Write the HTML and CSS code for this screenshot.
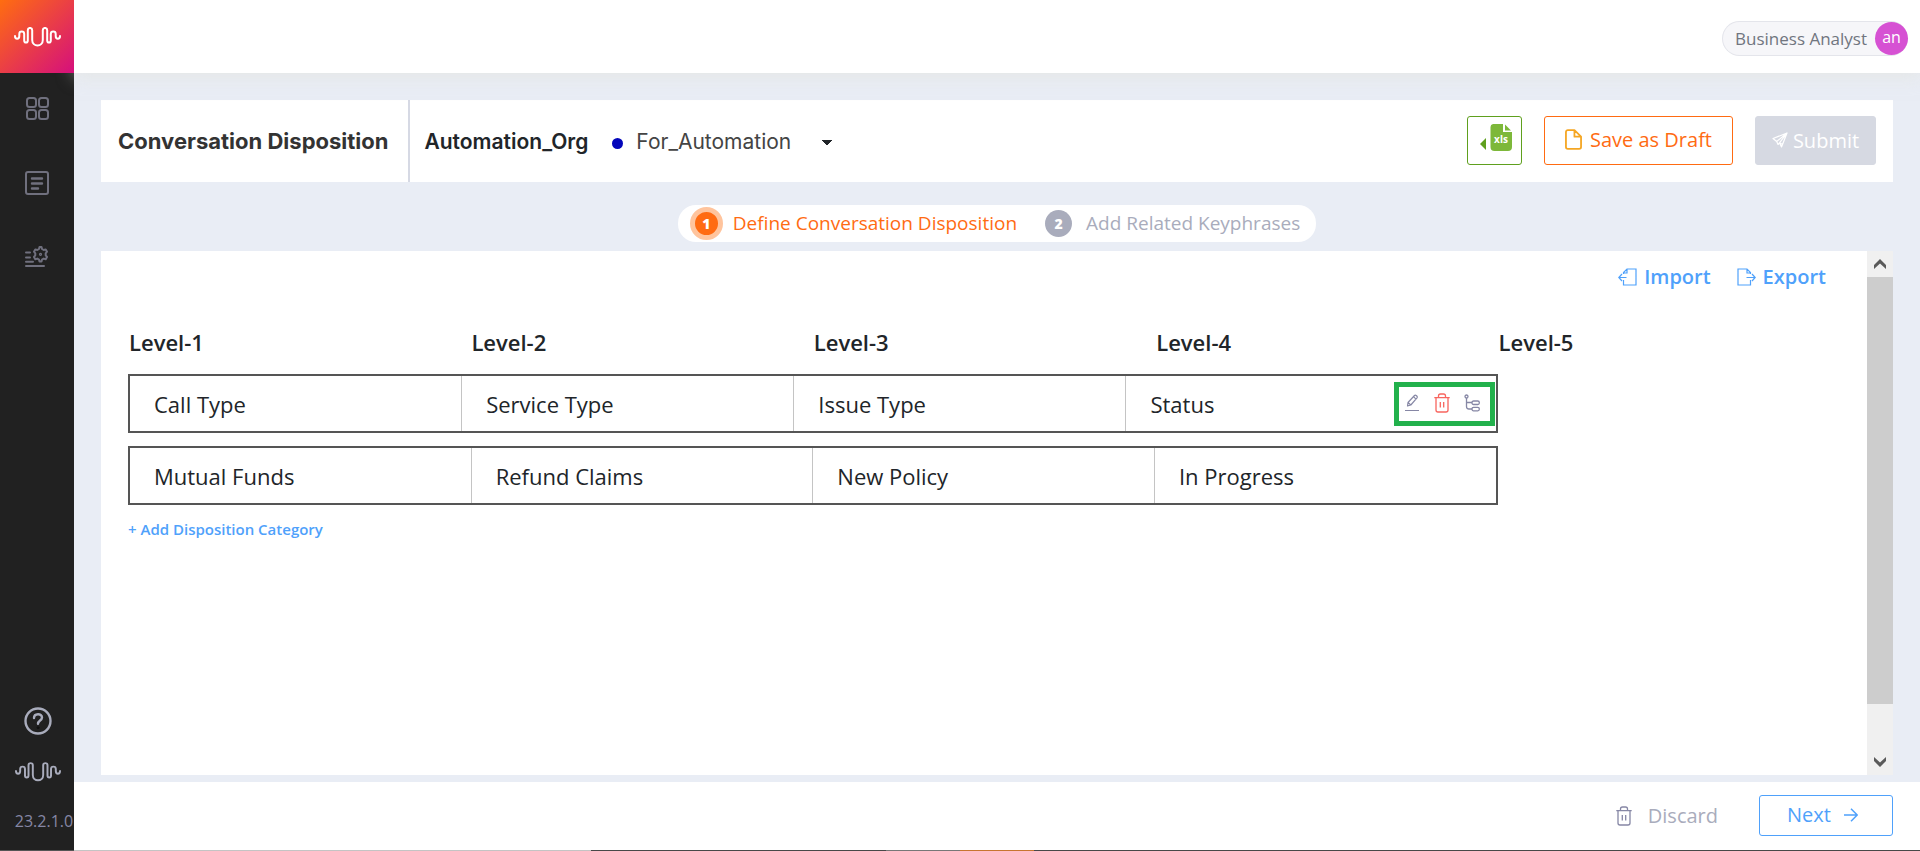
FILE: index.html
```html
<!DOCTYPE html>
<html lang="en">
<head>
    <meta charset="UTF-8">
    <meta name="viewport" content="width=device-width, initial-scale=1.0">
    <title>Conversation Disposition</title>
    <link rel="stylesheet" href="styles.css">
</head>
<body>
    <nav class="sidebar">
        <a href="#" class="logo" aria-label="Home">
            <svg width="47" height="20" viewBox="0 0 47 20" fill="none" stroke="#fff" stroke-width="2" stroke-linecap="round">
                <path d="M1 9c0 3.700 4.300 3.700 4.300 0V7c0-3.300 4.900-3.300 4.900 0v6.500c0 2.800 3.600 2.800 3.600 0V3.200c0-3 4.400-3 4.400 0V13c0 7.300 10.600 7.300 10.600 0V3.200c0-3 4.400-3 4.400 0v10.300c0 2.800 3.600 2.800 3.600 0V7c0-3.300 4.900-3.300 4.900 0v2c0 3.700 4.300 3.700 4.300 0"/>
            </svg>
        </a>
        <a href="#" class="nav-item" aria-label="Dashboard">
            <svg width="24" height="24" viewBox="0 0 24 24" fill="none" stroke="#70707e" stroke-width="2">
                <rect x="2" y="1" width="9" height="9" rx="2.500"/>
                <rect x="14" y="1" width="9" height="9" rx="2.500"/>
                <rect x="2" y="13" width="9" height="9" rx="2.500"/>
                <rect x="14" y="13" width="9" height="9" rx="2.500"/>
            </svg>
        </a>
        <a href="#" class="nav-item" aria-label="Reports">
            <svg width="24" height="24" viewBox="0 0 24 24" fill="none" stroke="#70707e" stroke-width="2" stroke-linecap="round">
                <rect x="1" y="1" width="22" height="22" rx="2"/>
                <path d="M7 7.500h10M7 12.500h10M7 17.500h6" stroke-width="2.400"/>
            </svg>
        </a>
        <a href="#" class="nav-item" aria-label="Settings">
            <svg width="24" height="22" viewBox="0 0 24 22" fill="none" stroke="#70707e" stroke-width="2" stroke-linecap="round" stroke-linejoin="round">
                <path d="M1 6.500h4M1 11.500h4M1 15.700h7M1 20h18"/>
                <path d="M14.500 1h2l.5 2 1.700 1 2-.6 1.300 2.300-1.300 1.600v2l1.300 1.600-1.300 2.300-2-.6-1.700 1-.5 2h-2l-.5-2-1.700-1-2 .6L9 10.900l1.300-1.600v-2L9 5.700l1.300-2.300 2 .6L14 3z"/>
                <circle cx="15.500" cy="8.300" r=".6"/>
            </svg>
        </a>
        <div class="sidebar-bottom">
            <a href="#" aria-label="Help">
                <svg width="28" height="28" viewBox="0 0 28 28" fill="none" stroke="#a9acbc" stroke-width="2.400" stroke-linecap="round">
                    <circle cx="14" cy="14" r="12.500"/>
                    <path d="M10 11c0-5 8-5 8-.5 0 3-4 3-4 6.300"/>
                    <circle cx="14" cy="20.700" r="1" fill="#111" stroke="#111" stroke-width="1"/>
                </svg>
            </a>
            <svg width="46" height="20" viewBox="0 0 47 20" fill="none" stroke="#a9acbc" stroke-width="2" stroke-linecap="round">
                <path d="M1 9c0 3.700 4.300 3.700 4.300 0V7c0-3.300 4.900-3.300 4.900 0v6.500c0 2.800 3.600 2.800 3.600 0V3.200c0-3 4.400-3 4.400 0V13c0 7.300 10.600 7.300 10.600 0V3.200c0-3 4.400-3 4.400 0v10.300c0 2.800 3.600 2.800 3.600 0V7c0-3.300 4.900-3.300 4.900 0v2c0 3.700 4.300 3.700 4.300 0"/>
            </svg>
            <span class="version">23.2.1.0</span>
        </div>
    </nav>

    <div class="page">
        <header class="topbar">
            <button type="button" class="user">
                <span>Business Analyst</span>
                <span class="avatar">an</span>
            </button>
        </header>

        <main class="content">
            <div class="title-bar">
                <h1>Conversation Disposition</h1>
                <label class="org" for="project">Automation_Org</label>
                <span class="dot"></span>
                <select id="project" class="project">
                    <option>For_Automation</option>
                </select>
                <div class="actions">
                    <button type="button" class="btn btn-xls" aria-label="Download xls">
                        <svg width="34" height="30" viewBox="0 0 34 30">
                            <path d="M1 21l6-6v12z" fill="#5fa01e"/>
                            <path d="M14 1h10v8h9v15a4 4 0 0 1-4 4H15.500a4 4 0 0 1-4-4V4A3 3 0 0 1 14 1z" fill="#7db83a"/>
                            <path d="M26 1.500l6 6h-6z" fill="#7db83a"/>
                            <text x="22" y="20" text-anchor="middle" class="xls-text">xls</text>
                        </svg>
                    </button>
                    <button type="button" class="btn btn-draft">
                        <svg width="17" height="21" viewBox="0 0 18 22" fill="none" stroke="#f5a623" stroke-width="1.900" stroke-linejoin="round">
                            <path d="M10 1H3a2 2 0 0 0-2 2v16a2 2 0 0 0 2 2h12a2 2 0 0 0 2-2V8zv7h7"/>
                        </svg>
                        Save as Draft
                    </button>
                    <button type="button" class="btn btn-submit" disabled>
                        <svg width="16" height="16" viewBox="0 0 16 16" fill="none" stroke="#fff" stroke-width="1.200" stroke-linejoin="round">
                            <path d="M15 1L1 6.500l3.700 3zM15 1l-4.500 11.500-3-1.700zM15 1L4.700 9.500l1.300 3 1.500-1.700M7.500 10.800L9.500 15l1-2.500"/>
                        </svg>
                        Submit
                    </button>
                </div>
            </div>

            <ol class="steps">
                <li class="step active"><span class="step-num">1</span>Define Conversation Disposition</li>
                <li class="step"><span class="step-num">2</span>Add Related Keyphrases</li>
            </ol>

            <section class="panel">
                <div class="panel-body">
                    <div class="panel-tools">
                        <button type="button" class="link-btn">
                            <svg width="19" height="18" viewBox="0 0 19 18" fill="none" stroke="#4fa1fb" stroke-width="1.200">
                                <path d="M5.500 6V4.500L9 1h9v16H5.500v-5M9 1v4H5.500M8.500 9.500H1M4 6L.8 9.500 4 13"/>
                            </svg>
                            Import
                        </button>
                        <button type="button" class="link-btn">
                            <svg width="19" height="18" viewBox="0 0 19 18" fill="none" stroke="#4fa1fb" stroke-width="1.200">
                                <path d="M13.500 6V4.500L10 1H1v16h12.500v-5M10 1v4h3.500M9.500 9.500H18M15 6l3.200 3.500L15 13"/>
                            </svg>
                            Export
                        </button>
                    </div>

                    <div class="levels">
                        <h2>Level-1</h2>
                        <h2>Level-2</h2>
                        <h2>Level-3</h2>
                        <h2>Level-4</h2>
                        <h2>Level-5</h2>
                    </div>

                    <div class="row">
                        <div class="cell">Call Type</div>
                        <div class="cell">Service Type</div>
                        <div class="cell">Issue Type</div>
                        <div class="cell cell-tools">
                            Status
                            <div class="row-tools">
                                <button type="button" aria-label="Edit">
                                    <svg width="16" height="18" viewBox="0 0 16 18" fill="none" stroke="#8687a5" stroke-width="1.200" stroke-linejoin="round">
                                        <path d="M3.500 12l.5-3.500 6.500-7c1-1 3.500 1 2.500 2.300L6.800 11zM9.500 2.700l2.500 2.500M4 8.500L6.800 11M1 16.500h14"/>
                                    </svg>
                                </button>
                                <button type="button" aria-label="Delete">
                                    <svg width="16" height="20" viewBox="0 0 16 20" fill="none" stroke="#f8655f" stroke-width="1.300">
                                        <path d="M.3 4.700h15.400M4.500 4.700V3a2 2 0 0 1 2-2h3a2 2 0 0 1 2 2v1.700M2 4.700V17a2 2 0 0 0 2 2h8a2 2 0 0 0 2-2V4.700M6.300 9v5.500M9.700 9v5.500"/>
                                    </svg>
                                </button>
                                <button type="button" aria-label="Add sub level">
                                    <svg width="16" height="18" viewBox="0 0 16 18" fill="none" stroke="#8687a5" stroke-width="1.300">
                                        <circle cx="2.500" cy="2.500" r="1.500"/>
                                        <path d="M2.500 4v8.500a2.500 2.500 0 0 0 2.500 2.500h3M2.500 8.500H8"/>
                                        <rect x="8" y="7" width="7.300" height="3.500" rx="1.500"/>
                                        <rect x="8" y="13.300" width="7.300" height="3.500" rx="1.500"/>
                                    </svg>
                                </button>
                            </div>
                        </div>
                    </div>
                    <div class="row">
                        <div class="cell">Mutual Funds</div>
                        <div class="cell">Refund Claims</div>
                        <div class="cell">New Policy</div>
                        <div class="cell">In Progress</div>
                    </div>

                    <button type="button" class="add-btn">+ Add Disposition Category</button>
                </div>

                <div class="scrollbar">
                    <button type="button" class="scroll-btn" aria-label="Scroll up">
                        <svg width="14" height="12" viewBox="0 0 14 12" fill="#5a5a5a"><path d="M7 1l6 6v4L7 5.500 1 11V7z"/></svg>
                    </button>
                    <div class="track"><div class="thumb"></div></div>
                    <button type="button" class="scroll-btn" aria-label="Scroll down">
                        <svg width="14" height="12" viewBox="0 0 14 12" fill="#5a5a5a"><path d="M7 11l6-6V1L7 6.500 1 1v4z"/></svg>
                    </button>
                </div>
            </section>
        </main>

        <footer class="footer">
            <button type="button" class="btn-discard">
                <svg width="16" height="20" viewBox="0 0 16 20" fill="none" stroke="#8687a5" stroke-width="1.300">
                    <path d="M.3 4.700h15.400M4.500 4.700V3a2 2 0 0 1 2-2h3a2 2 0 0 1 2 2v1.700M2 4.700V17a2 2 0 0 0 2 2h8a2 2 0 0 0 2-2V4.700M6.300 9v5.500M9.700 9v5.500"/>
                </svg>
                Discard
            </button>
            <button type="button" class="btn btn-next">
                Next
                <svg width="14" height="14" viewBox="0 0 14 14" fill="none" stroke="#4fa1fb" stroke-width="1.500">
                    <path d="M0 7h13M7 .8L13.200 7 7 13.200"/>
                </svg>
            </button>
        </footer>
    </div>
</body>
</html>
```
FILE: styles.css
```css
* {
    box-sizing: border-box;
}

body {
    margin: 0;
    min-height: 100vh;
    display: flex;
    font-family: "Open Sans", sans-serif;
    color: #212529;
    background-color: #e9edf5;
}

button {
    font-family: inherit;
    padding: 0;
    border: none;
    background: none;
    cursor: pointer;
}

svg {
    display: block;
    flex: none;
}

/* Sidebar */
.sidebar {
    width: 74px;
    flex: none;
    display: flex;
    flex-direction: column;
    align-items: center;
    background-color: #212121;
    border-bottom: 1px solid #555;
}

.logo {
    width: 100%;
    height: 73px;
    display: flex;
    align-items: center;
    justify-content: center;
    background: linear-gradient(135deg, #ff6d10, #d50f7d);
    position: relative;
    z-index: 2;
}

.nav-item {
    height: 74px;
    padding-bottom: 2px;
    display: flex;
    align-items: center;
}

.sidebar-bottom {
    margin-top: auto;
    padding: 0 0 17px 2px;
    display: flex;
    flex-direction: column;
    align-items: center;
    gap: 27px;
}

.version {
    color: #8687a5;
    font-size: 16px;
    line-height: 24px;
    margin-left: 12px;
}

/* Top bar */
.page {
    flex: 1;
    min-width: 0;
    display: flex;
    flex-direction: column;
}

.topbar {
    height: 73px;
    padding: 4px 12px 0;
    display: flex;
    align-items: center;
    justify-content: flex-end;
    background-color: #fff;
    box-shadow: 0 4px 16px rgba(226, 226, 216, 0.5);
    position: relative;
    z-index: 1;
}

.user {
    height: 35px;
    padding-left: 12px;
    display: flex;
    align-items: center;
    gap: 8px;
    font-size: 17px;
    color: #70757f;
    background-color: #f6f6f9;
    border: 1px solid #e4e5eb;
    border-right: none;
    border-radius: 18px;
}

.avatar {
    width: 33px;
    height: 33px;
    border-radius: 50%;
    background-color: #d651d3;
    color: #fff;
    font-size: 16px;
    line-height: 30px;
    text-align: center;
}

.content {
    flex: 1;
    padding: 27px 27px 7px;
    display: flex;
    flex-direction: column;
}

/* Title bar */
.title-bar {
    height: 82px;
    display: flex;
    align-items: center;
    background-color: #fff;
}

h1 {
    margin: 0;
    align-self: stretch;
    display: flex;
    align-items: center;
    padding: 0 20px 0 17px;
    border-right: 2px solid #d6d9e4;
    font-family: Inter, sans-serif;
    font-size: 22px;
    font-weight: 700;
    color: #333;
}

.org {
    margin-left: 14px;
    font-family: Inter, sans-serif;
    font-size: 21px;
    font-weight: 600;
}

.dot {
    width: 11px;
    height: 11px;
    margin: 4px 13px 0 24px;
    border-radius: 50%;
    background-color: #0306bb;
}

.project {
    width: 196px;
    padding: 0;
    border: none;
    appearance: none;
    font-family: Inter, sans-serif;
    font-size: 21px;
    color: #444;
    background: conic-gradient(from -45deg at 50% 100%, #212529 90deg, transparent 0) right 55% / 10px 5px no-repeat;
}

.actions {
    margin-left: auto;
    padding: 0 17px 2px 0;
    display: flex;
    gap: 22px;
}

.btn {
    height: 49px;
    display: flex;
    align-items: center;
    justify-content: center;
    gap: 8px;
    font-size: 20px;
    font-weight: 500;
    border: 1px solid;
    border-radius: 3px;
}

.btn-xls {
    width: 55px;
    color: #5fa01e;
    padding: 0 0 4px 3px;
}

.xls-text {
    font-size: 10px;
    font-weight: 700;
    fill: #fff;
}

.btn-draft {
    width: 189px;
    padding-bottom: 2px;
    color: #ff6b12;
}

.btn-submit {
    width: 121px;
    gap: 5px;
    color: #fff;
    background-color: #d6d9e2;
    border-color: #d6d9e2;
}

/* Steps */
.steps {
    margin: 23px 0 9px;
    height: 37px;
    padding: 0 16px 0 12px;
    align-self: center;
    display: flex;
    align-items: center;
    gap: 28px;
    list-style: none;
    background-color: #fff;
    border-radius: 18px;
}

.step {
    display: flex;
    align-items: center;
    gap: 14px;
    font-size: 19px;
    font-weight: 500;
    line-height: 33px;
    color: #a9acbc;
}

.step-num {
    width: 27px;
    height: 27px;
    border-radius: 50%;
    background-color: #a9acbc;
    color: #fff;
    font-size: 14px;
    font-weight: 800;
    line-height: 27px;
    text-align: center;
}

.active {
    gap: 10px;
    color: #ff6b12;
}

.active .step-num {
    width: 33px;
    height: 33px;
    line-height: 23px;
    border: 5px solid #ffc49d;
    background-color: #ff6b12;
}

/* Panel */
.panel {
    flex: 1;
    display: flex;
    background-color: #fff;
}

.panel-body {
    flex: 1;
    padding: 12px 27px;
}

.panel-tools {
    display: flex;
    justify-content: flex-end;
    gap: 26px;
    padding-right: 14px;
}

.link-btn {
    display: flex;
    align-items: center;
    gap: 7px;
    font-size: 20px;
    font-weight: 600;
    line-height: 28px;
    color: #4fa1fb;
}

.levels {
    display: grid;
    grid-template-columns: repeat(5, 1fr);
    margin: 35px 0 16px;
}

h2 {
    margin: 0;
    padding-left: 1px;
    font-size: 22px;
    font-weight: 600;
    line-height: 32px;
}

.row {
    width: 80%;
    height: 59px;
    margin-bottom: 13px;
    display: flex;
    border: 2px solid #555;
}

.cell {
    flex: 1;
    display: flex;
    align-items: center;
    padding-left: 24px;
    font-size: 22px;
    border-right: 1px solid #c4c4c4;
}

.cell:last-child {
    border-right: none;
}

.cell-tools {
    padding-right: 38px;
    position: relative;
}

/* Highlighted box over the last cell */
.row-tools {
    position: absolute;
    right: 1px;
    top: 6px;
    width: 101px;
    height: 44px;
    padding: 0 10px 2px 5px;
    display: flex;
    align-items: center;
    justify-content: space-between;
    border: 5px solid #22b14c;
}

.add-btn {
    font-size: 15px;
    font-weight: 600;
    line-height: 22px;
    color: #4fa1fb;
}

.scrollbar {
    width: 26px;
    display: flex;
    flex-direction: column;
    background-color: #f0f0f0;
}

.scroll-btn {
    height: 26px;
    display: flex;
    align-items: center;
    justify-content: center;
}

.track {
    flex: 1;
}

.thumb {
    height: 427px;
    background-color: #cdcdcd;
}

/* Footer */
.footer {
    height: 69px;
    padding: 0 27px 2px;
    display: flex;
    align-items: center;
    justify-content: flex-end;
    gap: 41px;
    background: linear-gradient(to right, #c4c4c4 28%, #484848 28% 44%, #777 44% 48%, #c87530 48% 52%, #484848 52%) bottom / 100% 1px no-repeat #fff;
}

.btn-discard {
    display: flex;
    align-items: center;
    gap: 16px;
    font-size: 20px;
    color: #a9acbc;
}

.btn-next {
    width: 134px;
    height: 41px;
    padding: 0 7px 2px 0;
    gap: 13px;
    color: #4fa1fb;
}
```
